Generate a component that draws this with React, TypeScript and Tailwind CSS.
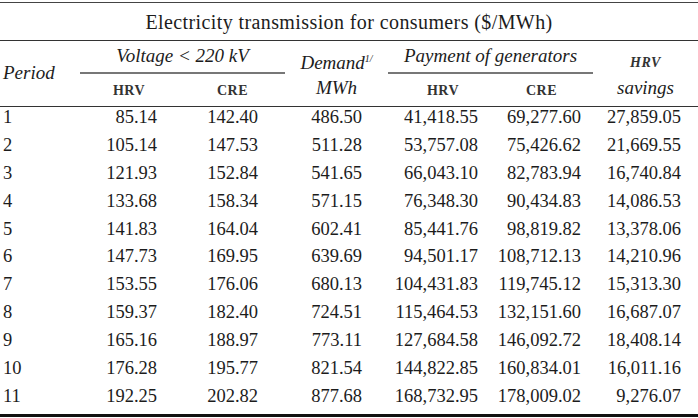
const rows: string[][] = [
  ['1', '85.14', '142.40', '486.50', '41,418.55', '69,277.60', '27,859.05'],
  ['2', '105.14', '147.53', '511.28', '53,757.08', '75,426.62', '21,669.55'],
  ['3', '121.93', '152.84', '541.65', '66,043.10', '82,783.94', '16,740.84'],
  ['4', '133.68', '158.34', '571.15', '76,348.30', '90,434.83', '14,086.53'],
  ['5', '141.83', '164.04', '602.41', '85,441.76', '98,819.82', '13,378.06'],
  ['6', '147.73', '169.95', '639.69', '94,501.17', '108,712.13', '14,210.96'],
  ['7', '153.55', '176.06', '680.13', '104,431.83', '119,745.12', '15,313.30'],
  ['8', '159.37', '182.40', '724.51', '115,464.53', '132,151.60', '16,687.07'],
  ['9', '165.16', '188.97', '773.11', '127,684.58', '146,092.72', '18,408.14'],
  ['10', '176.28', '195.77', '821.54', '144,822.85', '160,834.01', '16,011.16'],
  ['11', '192.25', '202.82', '877.68', '168,732.95', '178,009.02', '9,276.07'],
];

const cols = 'grid grid-cols-[78px_102px_105px_103px_102px_103px_105px]';

// right padding per value column so the figures sit where the source has them
const pads = ['', 'pr-[23px]', 'pr-[27px]', 'pr-[26px]', 'pr-[12px]', 'pr-[12px]', 'pr-[17px]'];

function SmallCap({ children, italic }: { children: React.ReactNode; italic?: boolean }) {
  return (
    <span className={`text-[14px] font-bold tracking-[0.5px] text-[#333] ${italic ? 'italic' : ''}`}>
      {children}
    </span>
  );
}

export default function App() {
  return (
    <div className="w-[698px] h-[418px] bg-white text-[#1c1c1c] font-['Liberation_Serif',serif] pt-[2px]">
      {/* title */}
      <div className="border-t border-[#444] border-b-[1.5px] border-b-[#333] h-[39px] flex items-center justify-center">
        <span className="text-[20px] tracking-[0.4px]">Electricity transmission for consumers ($/MWh)</span>
      </div>

      {/* column headers */}
      <div className={`${cols} grid-rows-[33px_32px] border-b border-[#333]`}>
        <div className="row-span-2 flex items-center pl-[3px] italic text-[19px]">Period</div>
        <div className="col-span-2 flex items-center justify-center border-b-2 border-[#777] ml-[2px] italic text-[19px]">
          Voltage &lt; 220 kV
        </div>
        <div className="row-span-2 flex flex-col items-center justify-center italic text-[19px] leading-[25px] pt-[2px]">
          <span>
            Demand<sup className="text-[10px] -top-[7px]">1/</sup>
          </span>
          <span>MWh</span>
        </div>
        <div className="col-span-2 flex items-center justify-center border-b-2 border-[#777] italic text-[19px]">
          Payment of generators
        </div>
        <div className="row-span-2 flex flex-col items-center justify-center leading-[25px] pt-[2px]">
          <SmallCap italic>HRV</SmallCap>
          <span className="italic text-[19px]">savings</span>
        </div>
        <div className="flex items-center justify-center"><SmallCap>HRV</SmallCap></div>
        <div className="flex items-center justify-center"><SmallCap>CRE</SmallCap></div>
        <div className="flex items-center justify-center pl-[8px]"><SmallCap>HRV</SmallCap></div>
        <div className="flex items-center justify-center"><SmallCap>CRE</SmallCap></div>
      </div>

      {/* body */}
      <div className="border-b-[3px] border-[#111]">
        {rows.map((r) => (
          <div key={r[0]} className={`${cols} h-[27.9px] text-[18.5px] leading-[20px]`}>
            {r.map((v, i) => (
              <div key={i} className={i === 0 ? 'pl-[3px]' : `text-right ${pads[i]}`}>
                {v}
              </div>
            ))}
          </div>
        ))}
      </div>
    </div>
  );
}
